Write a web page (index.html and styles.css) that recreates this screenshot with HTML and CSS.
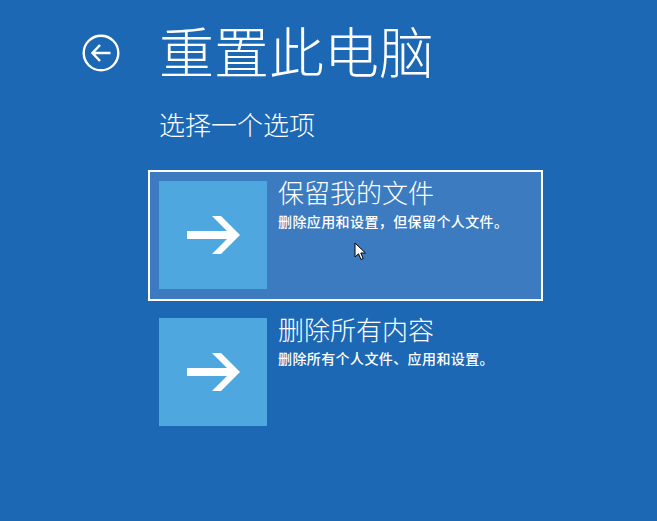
FILE: index.html
```html
<!DOCTYPE html>
<html lang="zh-CN">
<head>
<meta charset="utf-8">
<title>重置此电脑</title>
<link rel="stylesheet" href="styles.css">
</head>
<body>
<div class="page">
  <header class="header">
    <div class="back">
      <svg width="38" height="38" viewBox="0 0 38 38">
        <circle cx="19" cy="19" r="17.3" fill="none" stroke="#fff" stroke-width="2.4"/>
        <path d="M10.5 19 H28.5 M18 11 L10.5 19 L18 27" fill="none" stroke="#fff" stroke-width="2.5" stroke-linejoin="miter"/>
      </svg>
    </div>
    <h1 class="title">重置此电脑</h1>
  </header>
  <div class="subtitle">选择一个选项</div>
  <div class="options">
    <div class="option selected">
      <div class="tile">
        <svg width="108" height="108" viewBox="0 0 108 108">
          <rect x="28" y="50" width="45" height="8" fill="#fff"/>
          <polygon points="53,35 62,35 81,54 62,73 53,73 72,54" fill="#fff"/>
        </svg>
      </div>
      <div class="text">
        <div class="opt-title">保留我的文件</div>
        <div class="opt-desc">删除应用和设置，但保留个人文件。</div>
      </div>
    </div>
    <div class="option">
      <div class="tile">
        <svg width="108" height="108" viewBox="0 0 108 108">
          <rect x="28" y="50" width="45" height="8" fill="#fff"/>
          <polygon points="53,35 62,35 81,54 62,73 53,73 72,54" fill="#fff"/>
        </svg>
      </div>
      <div class="text">
        <div class="opt-title">删除所有内容</div>
        <div class="opt-desc">删除所有个人文件、应用和设置。</div>
      </div>
    </div>
  </div>
  <svg class="cursor" width="14" height="20" viewBox="0 0 14 20">
    <path d="M1 1 V15 L4.5 11.8 L7 17.5 L9.2 16.5 L6.8 11 H11.5 Z" fill="#fff" stroke="#000" stroke-width="1"/>
  </svg>
</div>
</body>
</html>
```
FILE: styles.css
```css
html, body {
  margin: 0;
  padding: 0;
  background: #1c68b4;
}
.page {
  position: relative;
  width: 657px;
  height: 521px;
  overflow: hidden;
  background: #1c68b4;
  color: #fff;
  font-family: "Noto Sans CJK SC", "Noto Sans", sans-serif;
}
.header {
  display: flex;
  align-items: center;
  padding: 22px 0 0 82px;
}
.back {
  width: 38px;
  height: 38px;
  margin-top: 6px;
  margin-right: 39px;
}
.back svg { display: block; }
.title {
  margin: 0;
  font-size: 55px;
  font-weight: 300;
  line-height: 55px;
  letter-spacing: 0;
}
.subtitle {
  margin: 34px 0 0 159px;
  font-size: 26px;
  font-weight: 300;
  line-height: 26px;
}
.options {
  display: flex;
  flex-direction: column;
  gap: 6px;
  margin: 33px 0 0 148px;
  width: 395px;
}
.option {
  display: flex;
  gap: 11px;
  height: 131px;
  box-sizing: border-box;
  padding: 9px;
  border: 2px solid transparent;
}
.option.selected {
  background: #3c7bc0;
  border-color: #fff;
}
.tile {
  width: 108px;
  height: 108px;
  flex: none;
  background: #4fa7df;
}
.tile svg { display: block; }
.text {
  display: flex;
  flex-direction: column;
}
.opt-title {
  font-size: 26px;
  font-weight: 300;
  line-height: 26px;
  margin-top: -2px;
}
.opt-desc {
  font-size: 14px;
  font-weight: 500;
  line-height: 14px;
  letter-spacing: 0.4px;
  margin-top: 9px;
}
.cursor {
  position: absolute;
  left: 354px;
  top: 242px;
}
```
